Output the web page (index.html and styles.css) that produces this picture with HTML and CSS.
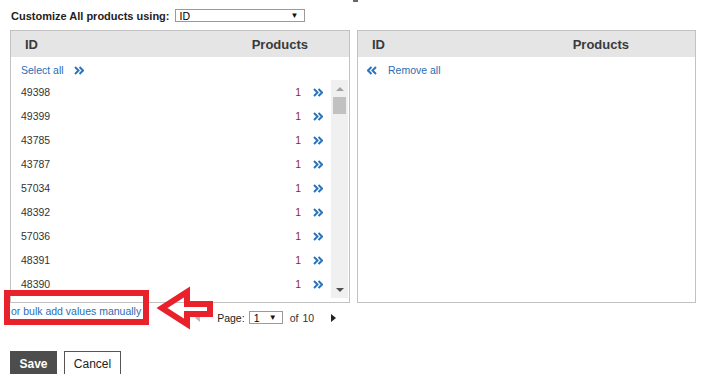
FILE: index.html
```html
<!DOCTYPE html>
<html>
<head>
<meta charset="utf-8">
<link rel="stylesheet" href="styles.css">
</head>
<body>
<div class="page">
  <div class="topmark"><span></span></div>
  <div class="toolbar">
    <label class="toolbar-label">Customize All products using:</label>
    <div class="select select-wide"><span>ID</span><span class="caret">▼</span></div>
  </div>

  <div class="panels">
    <div class="panel panel-left">
      <div class="panel-head">
        <span class="col-id">ID</span>
        <span class="col-products col-products-left">Products</span>
      </div>
      <div class="action-row">
        <a class="link">Select all</a>
        <svg class="chev chev-sel" viewBox="0 0 10 9"><path d="M1 1l3.5 3.5L1 8M5.5 1L9 4.5 5.5 8" fill="none" stroke="#2a74bf" stroke-width="2"/></svg>
      </div>
      <div class="list">
        <div class="rows">
          <div class="row"><span class="rid">49398</span><span class="cnt">1</span><svg class="chev" viewBox="0 0 10 9"><path d="M1 1l3.5 3.5L1 8M5.5 1L9 4.5 5.5 8" fill="none" stroke="#2a74bf" stroke-width="2"/></svg></div>
          <div class="row"><span class="rid">49399</span><span class="cnt">1</span><svg class="chev" viewBox="0 0 10 9"><path d="M1 1l3.5 3.5L1 8M5.5 1L9 4.5 5.5 8" fill="none" stroke="#2a74bf" stroke-width="2"/></svg></div>
          <div class="row"><span class="rid">43785</span><span class="cnt">1</span><svg class="chev" viewBox="0 0 10 9"><path d="M1 1l3.5 3.5L1 8M5.5 1L9 4.5 5.5 8" fill="none" stroke="#2a74bf" stroke-width="2"/></svg></div>
          <div class="row"><span class="rid">43787</span><span class="cnt">1</span><svg class="chev" viewBox="0 0 10 9"><path d="M1 1l3.5 3.5L1 8M5.5 1L9 4.5 5.5 8" fill="none" stroke="#2a74bf" stroke-width="2"/></svg></div>
          <div class="row"><span class="rid">57034</span><span class="cnt">1</span><svg class="chev" viewBox="0 0 10 9"><path d="M1 1l3.5 3.5L1 8M5.5 1L9 4.5 5.5 8" fill="none" stroke="#2a74bf" stroke-width="2"/></svg></div>
          <div class="row"><span class="rid">48392</span><span class="cnt">1</span><svg class="chev" viewBox="0 0 10 9"><path d="M1 1l3.5 3.5L1 8M5.5 1L9 4.5 5.5 8" fill="none" stroke="#2a74bf" stroke-width="2"/></svg></div>
          <div class="row"><span class="rid">57036</span><span class="cnt">1</span><svg class="chev" viewBox="0 0 10 9"><path d="M1 1l3.5 3.5L1 8M5.5 1L9 4.5 5.5 8" fill="none" stroke="#2a74bf" stroke-width="2"/></svg></div>
          <div class="row"><span class="rid">48391</span><span class="cnt">1</span><svg class="chev" viewBox="0 0 10 9"><path d="M1 1l3.5 3.5L1 8M5.5 1L9 4.5 5.5 8" fill="none" stroke="#2a74bf" stroke-width="2"/></svg></div>
          <div class="row"><span class="rid">48390</span><span class="cnt">1</span><svg class="chev" viewBox="0 0 10 9"><path d="M1 1l3.5 3.5L1 8M5.5 1L9 4.5 5.5 8" fill="none" stroke="#2a74bf" stroke-width="2"/></svg></div>
        </div>
        <div class="scrollbar">
          <div class="sb-btn"><span class="tri-up"></span></div>
          <div class="sb-track"><div class="sb-thumb"></div></div>
          <div class="sb-btn"><span class="tri-down"></span></div>
        </div>
      </div>
    </div>

    <div class="panel panel-right">
      <div class="panel-head">
        <span class="col-id">ID</span>
        <span class="col-products col-products-right">Products</span>
      </div>
      <div class="action-row action-row-right">
        <svg class="chev" viewBox="0 0 10 9"><path d="M4.5 1L1 4.5 4.5 8M9 1L5.5 4.5 9 8" fill="none" stroke="#2a74bf" stroke-width="2"/></svg>
        <a class="link">Remove all</a>
      </div>
    </div>
  </div>

  <div class="bottom-row">
    <a class="link bulk-link">or bulk add values manually</a>
    <div class="pager">
      <span class="pg-prev"></span>
      <span class="pg-label">Page:</span>
      <div class="select select-page"><span>1</span><span class="caret">▼</span></div>
      <span class="pg-of">of</span>
      <span class="pg-total">10</span>
      <span class="pg-next"></span>
    </div>
  </div>

  <div class="buttons">
    <button class="btn btn-save">Save</button>
    <button class="btn btn-cancel">Cancel</button>
  </div>

  <svg class="annotation" width="713" height="374" viewBox="0 0 713 374">
    <rect x="7" y="293" width="139" height="29" fill="none" stroke="#e8212a" stroke-width="6"/>
    <polygon points="162,308 187,292 187,304 210,304 210,314 187,314 187,324" fill="none" stroke="#e8212a" stroke-width="6" stroke-linejoin="miter"/>
  </svg>
</div>
</body>
</html>
```

FILE: styles.css
```css
* { box-sizing: border-box; }

body {
  margin: 0;
  font-family: "Liberation Sans", Arial, sans-serif;
  font-size: 10.5px;
  color: #333;
  background: #fff;
}

.page {
  position: relative;
  width: 713px;
  height: 374px;
  overflow: hidden;
}

.topmark {
  height: 2px;
}
.topmark span {
  display: block;
  margin-left: 353px;
  width: 5px;
  height: 2px;
  background: #666;
}

.toolbar {
  display: flex;
  align-items: center;
  height: 13px;
  margin-top: 7px;
  padding-left: 11px;
  gap: 5px;
}
.toolbar-label {
  font-weight: bold;
  font-size: 11px;
  color: #222;
}

.select {
  display: flex;
  align-items: center;
  justify-content: space-between;
  border: 1px solid #9a9a9a;
  background: #fff;
  color: #000;
  font-size: 10.5px;
  padding: 0 5px 0 4px;
}
.select-wide {
  width: 130px;
  height: 13px;
}
.select .caret {
  font-size: 8px;
  color: #111;
}
.select-page {
  width: 34px;
  height: 13px;
}

.panels {
  display: flex;
  gap: 7px;
  margin-top: 8px;
  margin-left: 10px;
}
.panel {
  border: 1px solid #c2c2c2;
  height: 273px;
  background: #fff;
}
.panel-left { width: 340px; }
.panel-right { width: 339px; }

.panel-head {
  display: flex;
  align-items: center;
  height: 26px;
  background: #e5e5e5;
  font-weight: bold;
  font-size: 13px;
  color: #3a3a3a;
}
.col-id {
  padding-left: 14px;
}
.col-products {
  margin-left: auto;
}
.col-products-left { margin-right: 41px; }
.col-products-right { margin-right: 66px; }

.link {
  color: #2a6db5;
  text-decoration: none;
}

.action-row {
  display: flex;
  align-items: center;
  height: 23px;
  padding-top: 3px;
  padding-left: 10px;
  gap: 10px;
}
.action-row-right {
  padding-left: 9px;
  gap: 11px;
}

.chev {
  width: 10px;
  height: 9px;
  flex: none;
}

.list {
  display: flex;
  height: 218px;
}
.rows {
  flex: 1;
  overflow: hidden;
}
.row {
  display: flex;
  align-items: center;
  height: 24px;
  padding-left: 10px;
  padding-right: 8px;
}
.rid { flex: 1; }
.cnt {
  color: #8b2b17;
  margin-right: 12px;
}

.scrollbar {
  width: 17px;
  margin-right: 1px;
  background: #f0f0f0;
  display: flex;
  flex-direction: column;
}
.sb-btn {
  height: 17px;
  display: flex;
  align-items: center;
  justify-content: center;
}
.sb-track {
  flex: 1;
  padding: 0 2px;
}
.sb-thumb {
  height: 17px;
  background: #c1c1c1;
}
.tri-up {
  width: 0;
  height: 0;
  border-left: 4px solid transparent;
  border-right: 4px solid transparent;
  border-bottom: 4px solid #a3a3a3;
}
.tri-down {
  width: 0;
  height: 0;
  border-left: 4px solid transparent;
  border-right: 4px solid transparent;
  border-top: 4px solid #505050;
}

.bottom-row {
  display: flex;
  height: 48px;
}
.bulk-link {
  padding-left: 11px;
  padding-top: 2px;
  line-height: 13px;
  height: 15px;
}
.pager {
  display: flex;
  align-items: center;
  height: 15px;
  margin-top: 7px;
  margin-left: 54px;
}
.pg-prev {
  width: 0;
  height: 0;
  border-top: 4px solid transparent;
  border-bottom: 4px solid transparent;
  border-right: 5px solid #bbb;
  margin-right: 17px;
}
.pg-label {
  margin-right: 4px;
  color: #222;
}
.pg-of {
  margin-left: 7px;
  margin-right: 4px;
}
.pg-next {
  width: 0;
  height: 0;
  border-top: 4px solid transparent;
  border-bottom: 4px solid transparent;
  border-left: 5px solid #222;
  margin-left: 17px;
}

.buttons {
  display: flex;
  gap: 7px;
  padding-left: 10px;
}
.btn {
  font-family: "Liberation Sans", Arial, sans-serif;
  font-size: 12px;
  height: 25px;
  padding: 0;
  margin: 0;
  cursor: pointer;
}
.btn-save {
  width: 47px;
  background: #4d4d4d;
  border: 1px solid #4d4d4d;
  color: #fff;
  font-weight: bold;
}
.btn-cancel {
  width: 57px;
  background: #fff;
  border: 1px solid #555;
  color: #222;
}

.annotation {
  position: absolute;
  top: 0;
  left: 0;
  pointer-events: none;
}
```
